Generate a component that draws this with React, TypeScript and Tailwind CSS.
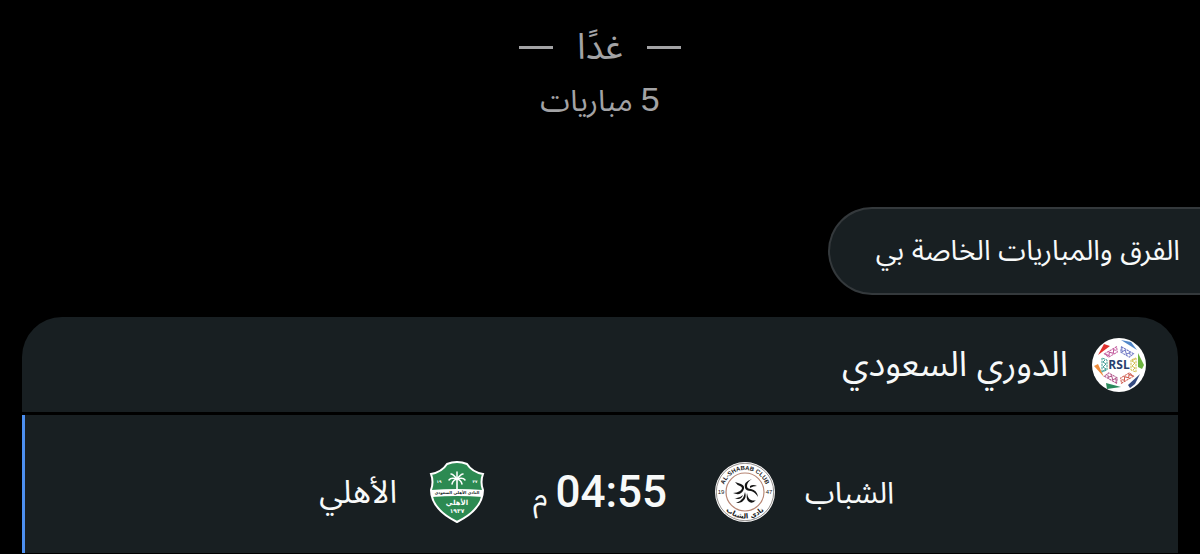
function LeagueLogo() {
  const patterns = [
    { angle: -30, color: "#c0569b" },
    { angle: 30, color: "#6f78c4" },
    { angle: 90, color: "#d2bd4e" },
    { angle: 150, color: "#cf5a4c" },
    { angle: 210, color: "#b2578c" },
    { angle: 270, color: "#3f9c94" },
  ];
  return (
    <svg viewBox="0 0 54 54" className="size-[54px] shrink-0" aria-hidden="true">
      <circle cx="27" cy="27" r="27" fill="#fff" />
      <path d="M6 17 L12 6 L18 8 Z" fill="#e0322f" />
      <path d="M29 2 L39 4 L45 12 Z" fill="#4f86c8" />
      <path d="M46 15 L52 27 L50 31 L46 29 Z" fill="#6cb33f" />
      <path d="M48 36 L43 46 L38 50 L36 47 Z" fill="#344a80" />
      <path d="M14 45 L29 49 L15 51 Z" fill="#2a8a5c" />
      <path d="M2 28 L6 26 L12 39 Z" fill="#ee8b3a" />
      {patterns.map((p) => (
        <g
          key={p.angle}
          transform={`rotate(${p.angle} 27 27)`}
          fill="none"
          stroke={p.color}
          strokeWidth="1"
        >
          <path d="M20 10 H34 L32 15 H22 Z" strokeDasharray="2.4 0.6" />
          <path d="M21 11 L23 14 L25 11 L28 14 L30 11 L32 13" />
        </g>
      ))}
      <text
        x="27"
        y="31"
        textAnchor="middle"
        fontSize="12"
        fontWeight="700"
        fill="#27406f"
        fontFamily="'Open Sans', sans-serif"
      >
        RSL
      </text>
    </svg>
  );
}

function ShababCrest() {
  return (
    <svg viewBox="0 0 60 60" className="size-[60px] shrink-0" aria-hidden="true">
      <defs>
        <path id="shabab-top" d="M8 30 A22 22 0 0 1 52 30" />
        <path id="shabab-bottom" d="M3.5 30 A26.5 26.5 0 0 0 56.5 30" />
      </defs>
      <circle cx="30" cy="30" r="30" fill="#fff" />
      <circle cx="30" cy="30" r="28.7" fill="none" stroke="#4b4442" strokeWidth="0.6" />
      <circle cx="30" cy="30" r="19" fill="none" stroke="#b78674" strokeWidth="1.2" />
      <g fontFamily="'Liberation Sans', sans-serif" fill="#222" textAnchor="middle">
        <text fontSize="6" fontWeight="700">
          <textPath href="#shabab-top" startOffset="50%">
            AL-SHABAB CLUB
          </textPath>
        </text>
        <text fontSize="6" x="6" y="32">19</text>
        <text fontSize="6" x="54" y="32">47</text>
      </g>
      <text
        fontSize="7"
        fontWeight="700"
        textAnchor="middle"
        fill="#222"
        fontFamily="'DejaVu Sans', sans-serif"
      >
        <textPath href="#shabab-bottom" startOffset="50%">
          نادي الشباب
        </textPath>
      </text>
      <g fill="#151515">
        <path d="M20 20 Q22 23 25 24 Q29 26 25 29 Q22 31 18 31 Q25 34 28 29 Q31 24 26 22 Q23 21 20 20 Z" />
        <path d="M37 17 Q28 20 30 26 Q31 29 36 29 Q40 30 43 35 Q42 28 36 27 Q32 27 32 24 Q32 20 37 17 Z" />
        <path d="M30 30 Q32 36 28 39 Q26 41 21 41 Q26 39 28 36 Q29 34 30 30 Z" />
        <path d="M32 31 Q33 37 36 38 Q39 39 41 38 Q37 43 33 39 Q31 36 32 31 Z" />
        <path d="M19 36 Q24 37 28 33 Q26 39 19 36 Z" />
        <path d="M35 24 Q38 22 42 24 Q38 24 35 26 Z" />
      </g>
    </svg>
  );
}

function AhliCrest() {
  return (
    <svg viewBox="0 0 56 62" className="h-[62px] w-[56px] shrink-0" aria-hidden="true">
      <path
        d="M18 3 Q28 -1 38 3 Q43 11 54 13 Q51 21 54 29 Q54 48 28 61 Q2 48 2 29 Q5 21 2 13 Q13 11 18 3 Z"
        fill="#2c8a52"
        stroke="#fff"
        strokeWidth="2"
      />
      <g fill="none" stroke="#fff" strokeLinecap="round" strokeWidth="1.5">
        <path d="M28 18 V29" strokeWidth="1.6" />
        <path d="M28 18 Q24 13 22 13" />
        <path d="M28 18 Q32 13 34 13" />
        <path d="M28 18 Q22 16 20 19" />
        <path d="M28 18 Q34 16 36 19" />
        <path d="M28 18 Q24 19 23 23" />
        <path d="M28 18 Q32 19 33 23" />
        <path d="M28 18 V11" />
      </g>
      <path d="M2 29 Q28 27 54 29 V36 Q28 34 3 36 Z" fill="#fff" />
      <g fill="#fff" fontFamily="'DejaVu Sans', sans-serif" fontWeight="700" textAnchor="middle">
        <text x="10" y="22" fontSize="4">١٩</text>
        <text x="46" y="22" fontSize="4">٣٧</text>
        <text x="28" y="33" fontSize="4" fill="#16281e">النادي الأهلي السعودي</text>
        <text x="28" y="44" fontSize="7">الأهلي</text>
        <text x="28" y="52" fontSize="6">١٩٣٧</text>
      </g>
    </svg>
  );
}

export default function App() {
  return (
    <main
      dir="rtl"
      lang="ar"
      className="min-h-screen bg-black font-['Liberation_Sans','Noto_Sans_Arabic','DejaVu_Sans',sans-serif] text-[#f7f9f9]"
    >
      <header className="flex flex-col items-center pt-[22px] text-[#a3a3a5]">
        <div className="flex items-center gap-6">
          <span className="h-[3px] w-[34px] bg-current" />
          <h1 className="text-[36px] leading-[50px]">غدًا</h1>
          <span className="h-[3px] w-[34px] bg-current" />
        </div>
        <p className="flex items-baseline gap-2 text-[30px] leading-[54px]">
          <span className="text-[34px]">5</span>
          <span>مباريات</span>
        </p>
      </header>

      <section className="mt-[79px]">
        <h2 className="flex h-[88px] w-fit items-center rounded-l-full border-2 border-r-0 border-[#34393c] bg-[#181f22] ps-5 pe-[46px] text-[28px]">
          الفرق والمباريات الخاصة بي
        </h2>

        <div className="mx-[22px] mt-[22px] flex flex-col gap-[3px]">
          <div className="flex h-[95px] items-center gap-6 rounded-t-[40px] bg-[#181f22] px-8">
            <LeagueLogo />
            <h3 className="text-[35px]">الدوري السعودي</h3>
          </div>

          <article className="grid grid-cols-[1fr_230px_1fr] items-center bg-[#181f22] pt-11 pb-7 shadow-[inset_3px_0_0_#4c8ff0]">
            <div className="flex items-center justify-end gap-[30px]">
              <span className="text-[30px]">الشباب</span>
              <ShababCrest />
            </div>
            <time dateTime="16:55" className="flex items-baseline justify-center gap-2">
              <span className="font-['Roboto'] text-[44px] font-medium">04:55</span>
              <span className="text-[30px]">م</span>
            </time>
            <div className="flex items-center gap-8">
              <AhliCrest />
              <span className="text-[32px]">الأهلي</span>
            </div>
          </article>
        </div>
      </section>
    </main>
  );
}
